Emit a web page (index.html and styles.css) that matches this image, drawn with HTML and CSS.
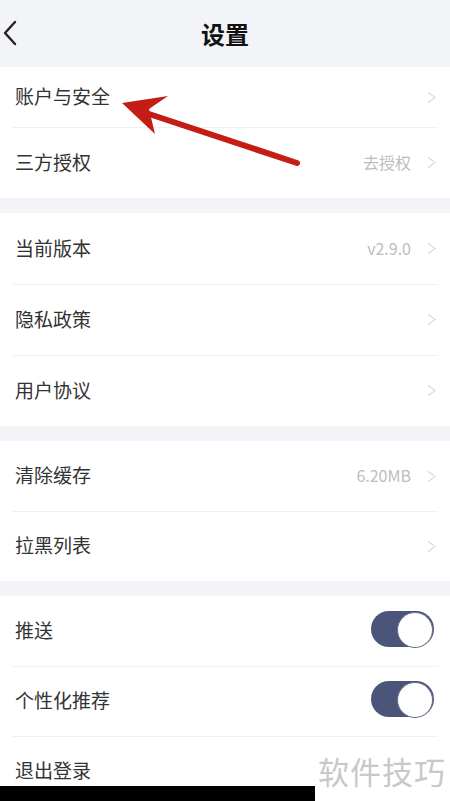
FILE: index.html
```html
<!DOCTYPE html>
<html lang="zh-CN">
<head>
    <meta charset="UTF-8">
    <meta name="viewport" content="width=device-width, initial-scale=1.0">
    <title>设置</title>
    <link rel="stylesheet" href="styles.css">
</head>
<body>
    <div class="cabecalho">
        <svg class="voltar" width="16" height="28" viewBox="0 0 16 28">
            <path d="M13 3 L3 14 L13 25" fill="none" stroke="#222" stroke-width="2.4" stroke-linecap="round" stroke-linejoin="round"/>
        </svg>
        <h1>设置</h1>
    </div>

    <div class="grupo">
        <div class="linha baixa"><span>账户与安全</span><i class="seta"></i></div>
        <div class="linha"><span>三方授权</span><em>去授权</em><i class="seta"></i></div>
    </div>

    <div class="grupo">
        <div class="linha"><span>当前版本</span><em>v2.9.0</em><i class="seta"></i></div>
        <div class="linha"><span>隐私政策</span><i class="seta"></i></div>
        <div class="linha"><span>用户协议</span><i class="seta"></i></div>
    </div>

    <div class="grupo curto">
        <div class="linha"><span>清除缓存</span><em>6.20MB</em><i class="seta"></i></div>
        <div class="linha"><span>拉黑列表</span><i class="seta"></i></div>
    </div>

    <div class="grupo curto">
        <div class="linha"><span>推送</span><b class="chave"></b></div>
        <div class="linha"><span>个性化推荐</span><b class="chave"></b></div>
        <div class="linha"><span>退出登录</span></div>
    </div>

    <!-- marcações por cima da captura -->
    <svg class="flecha" width="450" height="200" viewBox="0 0 450 200">
        <path d="M140 111 L297 163" stroke="#c41d16" stroke-width="6" stroke-linecap="round"/>
        <path d="M122 103 L168 96 L149 109 L155 134 Z" fill="#c41d16"/>
    </svg>
    <div class="marca">软件技巧</div>
    <div class="barra"></div>
</body>
</html>
```

FILE: styles.css
```css
*{
    margin: 0;
    padding: 0;
    box-sizing: border-box;
    font-family: "Noto Sans CJK SC", "Liberation Sans", sans-serif;
}

body{
    background-color: #f3f4f8;
    width: 450px;
    height: 801px;
    overflow: hidden;
    position: relative;
}

.cabecalho{
    height: 67px;
    display: flex;
    align-items: center;
    justify-content: center;
    position: relative;
}

.voltar{
    position: absolute;
    left: 2px;
    top: 19px;
}

.cabecalho h1{
    font-size: 24px;
    font-weight: 700;
    color: #111;
    margin-top: -1px;
}

.grupo{
    background-color: #fff;
    margin-bottom: 15px;
}

.grupo:first-of-type{
    margin-bottom: 14px;
}

.linha{
    height: 71px;
    display: flex;
    align-items: center;
    padding: 0 14px 0 15px;
    position: relative;
}

.curto .linha{
    height: 70px;
}

.linha.baixa{
    height: 60px;
}

.linha + .linha::before{
    content: "";
    position: absolute;
    top: 0;
    left: 12px;
    right: 12px;
    height: 1px;
    background-color: #f1f1f3;
}

.linha span{
    flex: 1;
    font-size: 19px;
    color: #333;
    margin-top: -3px;
}

.linha em{
    font-style: normal;
    font-size: 16px;
    color: #bdbdbd;
    margin-right: 13px;
    margin-top: -2px;
}

.seta{
    width: 9px;
    height: 9px;
    border-top: 1.3px solid #d2d2d2;
    border-right: 1.3px solid #d2d2d2;
    transform: rotate(45deg) skew(-8deg, -8deg);
    margin-right: 3px;
}

.chave{
    width: 63px;
    height: 36px;
    border-radius: 18px;
    background-color: #4b5479;
    position: relative;
    margin-right: 2px;
    margin-top: -4px;
}

.chave::after{
    content: "";
    position: absolute;
    right: 1px;
    top: 1px;
    width: 34px;
    height: 34px;
    border-radius: 50%;
    background-color: #fff;
    border: 1px solid #6a6f84;
}

.flecha{
    position: absolute;
    left: 0;
    top: 0;
}

.marca{
    position: absolute;
    left: 318px;
    top: 748px;
    font-size: 31px;
    color: #c8c8c8;
    letter-spacing: 1px;
    background-color: #fff;
}

.barra{
    position: absolute;
    left: 0;
    top: 786px;
    width: 315px;
    height: 15px;
    background-color: #000;
}
```
